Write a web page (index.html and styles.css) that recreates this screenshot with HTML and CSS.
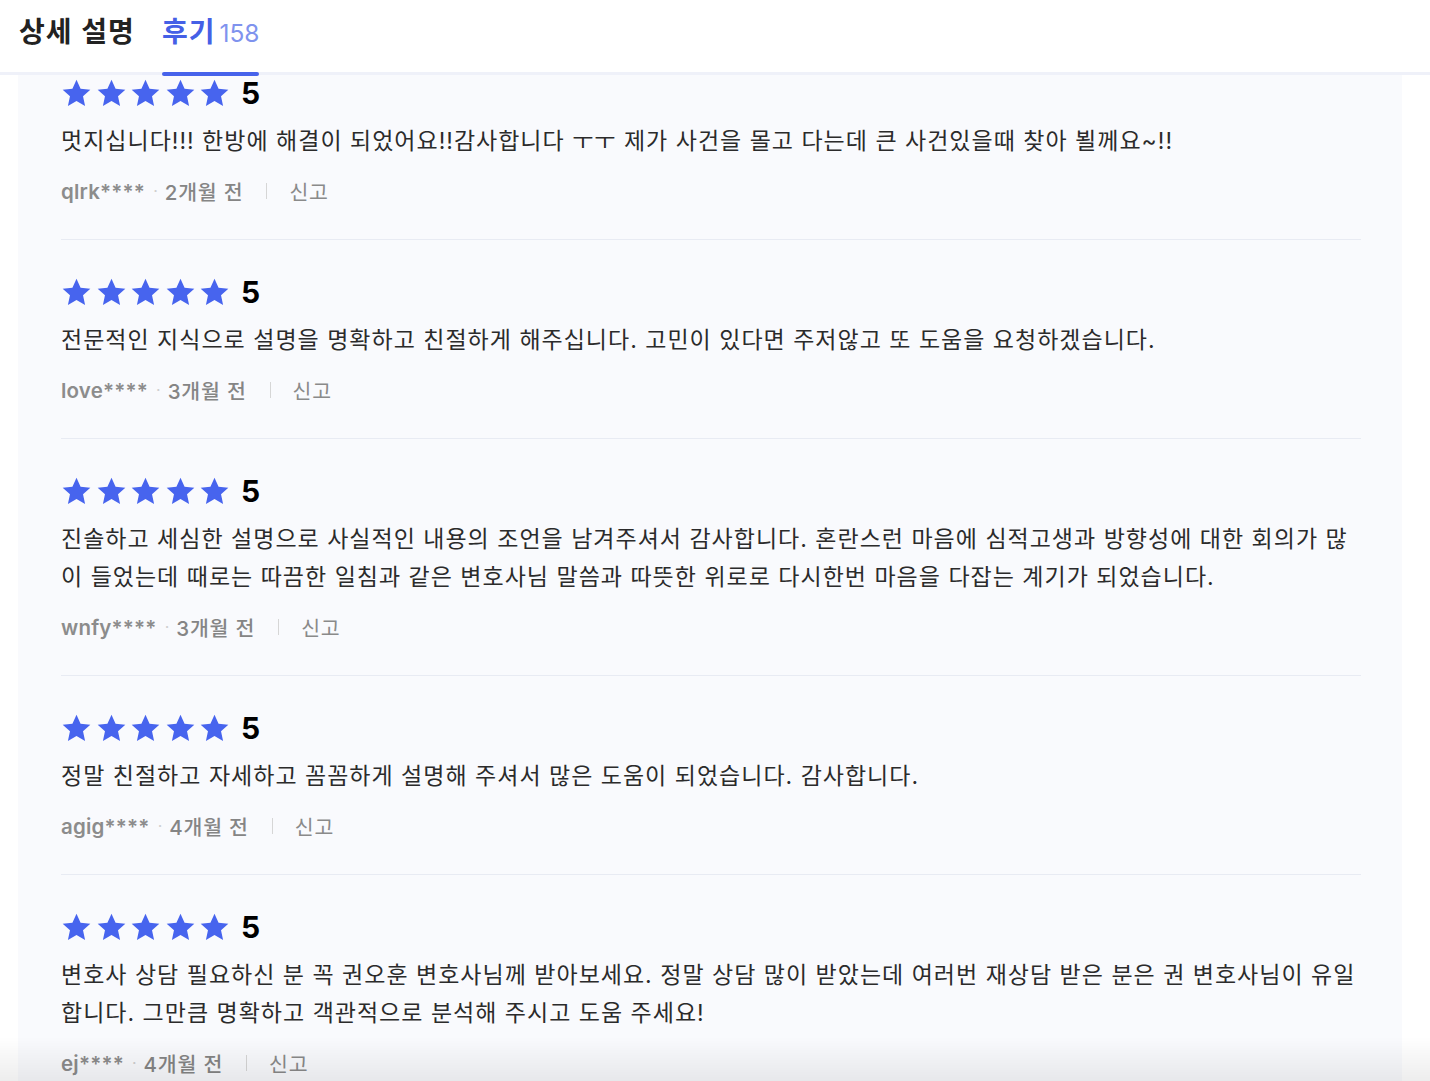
FILE: index.html
```html
<!DOCTYPE html>
<html lang="ko">
<head>
<meta charset="utf-8">
<title>후기</title>
<link rel="stylesheet" href="styles.css">
</head>
<body>
<svg width="0" height="0" class="defs" aria-hidden="true">
  <symbol id="star" viewBox="0 0 24 24">
    <path d="M12 1.4l3.15 6.95 7.55.8-5.65 5.05 1.6 7.45L12 17.85l-6.65 3.8 1.6-7.45L1.3 9.15l7.55-.8z"/>
  </symbol>
</svg>
<header class="tabs">
  <div class="tab">상세 설명</div>
  <div class="tab tab--active">후기<span class="tab-count">158</span></div>
</header>
<main class="panel">
  <article class="review">
    <div class="rating">
      <span class="stars"><svg class="star"><use href="#star"/></svg><svg class="star"><use href="#star"/></svg><svg class="star"><use href="#star"/></svg><svg class="star"><use href="#star"/></svg><svg class="star"><use href="#star"/></svg></span>
      <span class="score">5</span>
    </div>
    <p class="text">멋지십니다!!! 한방에 해결이 되었어요!!감사합니다 ㅜㅜ 제가 사건을 몰고 다는데 큰 사건있을때 찾아 뵐께요~!!</p>
    <div class="meta"><span class="user">qlrk****</span><span class="dot">·</span><span class="date">2개월 전</span><span class="sep"></span><span class="report">신고</span></div>
  </article>
  <article class="review">
    <div class="rating">
      <span class="stars"><svg class="star"><use href="#star"/></svg><svg class="star"><use href="#star"/></svg><svg class="star"><use href="#star"/></svg><svg class="star"><use href="#star"/></svg><svg class="star"><use href="#star"/></svg></span>
      <span class="score">5</span>
    </div>
    <p class="text">전문적인 지식으로 설명을 명확하고 친절하게 해주십니다. 고민이 있다면 주저않고 또 도움을 요청하겠습니다.</p>
    <div class="meta"><span class="user">love****</span><span class="dot">·</span><span class="date">3개월 전</span><span class="sep"></span><span class="report">신고</span></div>
  </article>
  <article class="review">
    <div class="rating">
      <span class="stars"><svg class="star"><use href="#star"/></svg><svg class="star"><use href="#star"/></svg><svg class="star"><use href="#star"/></svg><svg class="star"><use href="#star"/></svg><svg class="star"><use href="#star"/></svg></span>
      <span class="score">5</span>
    </div>
    <p class="text">진솔하고 세심한 설명으로 사실적인 내용의 조언을 남겨주셔서 감사합니다. 혼란스런 마음에 심적고생과 방향성에 대한 회의가 많이 들었는데 때로는 따끔한 일침과 같은 변호사님 말씀과 따뜻한 위로로 다시한번 마음을 다잡는 계기가 되었습니다.</p>
    <div class="meta"><span class="user">wnfy****</span><span class="dot">·</span><span class="date">3개월 전</span><span class="sep"></span><span class="report">신고</span></div>
  </article>
  <article class="review">
    <div class="rating">
      <span class="stars"><svg class="star"><use href="#star"/></svg><svg class="star"><use href="#star"/></svg><svg class="star"><use href="#star"/></svg><svg class="star"><use href="#star"/></svg><svg class="star"><use href="#star"/></svg></span>
      <span class="score">5</span>
    </div>
    <p class="text">정말 친절하고 자세하고 꼼꼼하게 설명해 주셔서 많은 도움이 되었습니다. 감사합니다.</p>
    <div class="meta"><span class="user">agig****</span><span class="dot">·</span><span class="date">4개월 전</span><span class="sep"></span><span class="report">신고</span></div>
  </article>
  <article class="review">
    <div class="rating">
      <span class="stars"><svg class="star"><use href="#star"/></svg><svg class="star"><use href="#star"/></svg><svg class="star"><use href="#star"/></svg><svg class="star"><use href="#star"/></svg><svg class="star"><use href="#star"/></svg></span>
      <span class="score">5</span>
    </div>
    <p class="text">변호사 상담 필요하신 분 꼭 권오훈 변호사님께 받아보세요. 정말 상담 많이 받았는데 여러번 재상담 받은 분은 권 변호사님이 유일합니다. 그만큼 명확하고 객관적으로 분석해 주시고 도움 주세요!</p>
    <div class="meta"><span class="user">ej****</span><span class="dot">·</span><span class="date">4개월 전</span><span class="sep"></span><span class="report">신고</span></div>
  </article>
</main>
<div class="bottom-fade"></div>
</body>
</html>
```
FILE: styles.css
```css
* { box-sizing: border-box; }
html, body { margin: 0; padding: 0; }
body {
  background: #ffffff;
  font-family: Inter, "Noto Sans CJK KR", sans-serif;
  color: #222;
  height: 1081px;
  overflow: hidden;
}
.defs { position: absolute; width: 0; height: 0; }

.tabs {
  height: 75px;
  display: flex;
  align-items: flex-start;
  gap: 27px;
  padding: 9px 0 0 19px;
  background: #fff;
  border-bottom: 3px solid #eff1f9;
}
.tab {
  position: relative;
  font-family: "Noto Sans CJK KR", sans-serif;
  font-size: 28px;
  font-weight: 700;
  line-height: 42px;
  color: #222;
  letter-spacing: 1px;
  height: 63px;
}
.tab--active { color: #4560e6; }
.tab-count {
  font-family: Inter, sans-serif;
  font-weight: 400;
  font-size: 24.5px;
  color: #7f93ee;
  margin-left: 4px;
  letter-spacing: 0;
}
.tab--active::after {
  content: "";
  position: absolute;
  left: 0;
  right: 0;
  bottom: -4px;
  height: 4px;
  border-radius: 2px;
  background: #4763eb;
}

.panel {
  margin: 0 28px 0 18px;
  padding: 0 41px 0 43px;
  background: #f9fafd;
  min-height: 1006px;
}
.review {
  padding: 38px 0 33px;
  border-bottom: 1px solid #e8ebf3;
}
.review:first-child { padding-top: 4px; }

.rating {
  display: flex;
  align-items: center;
  height: 28px;
}
.stars { display: flex; gap: 3.5px; }
.star {
  width: 31px;
  height: 31px;
  fill: #4764ee;
}
.score {
  font-family: Inter, "Liberation Sans", sans-serif;
  font-size: 30px;
  font-weight: 700;
  color: #000;
  margin-left: 11px;
  line-height: 28px;
}

.text {
  margin: 15px 0 0;
  font-family: Inter, "Noto Sans CJK KR", sans-serif;
  font-size: 23px;
  letter-spacing: 1px;
  line-height: 38px;
  color: #2b2b2b;
  word-break: break-all;
}

.meta {
  margin-top: 16px;
  display: flex;
  align-items: center;
  height: 30px;
  font-size: 20.5px;
  color: #8a8a8a;
  font-family: Inter, "Noto Sans CJK KR", sans-serif;
}
.user { font-weight: 600; color: #8c8c8c; letter-spacing: 0.2px; }
.dot { color: #cfcfcf; margin: 0 7px 0 8px; font-size: 16px; }
.date { font-weight: 500; color: #858585; letter-spacing: 0.8px; }
.sep {
  width: 1px;
  height: 16px;
  background: #d6d6d6;
  margin: 0 22px 0 23px;
}
.report { color: #8a8a8a; letter-spacing: 0.8px; }

.bottom-fade {
  position: fixed;
  left: 0;
  right: 0;
  bottom: 0;
  height: 44px;
  background: linear-gradient(to bottom, rgba(0,0,0,0), rgba(0,0,0,0.07));
  pointer-events: none;
}
```
